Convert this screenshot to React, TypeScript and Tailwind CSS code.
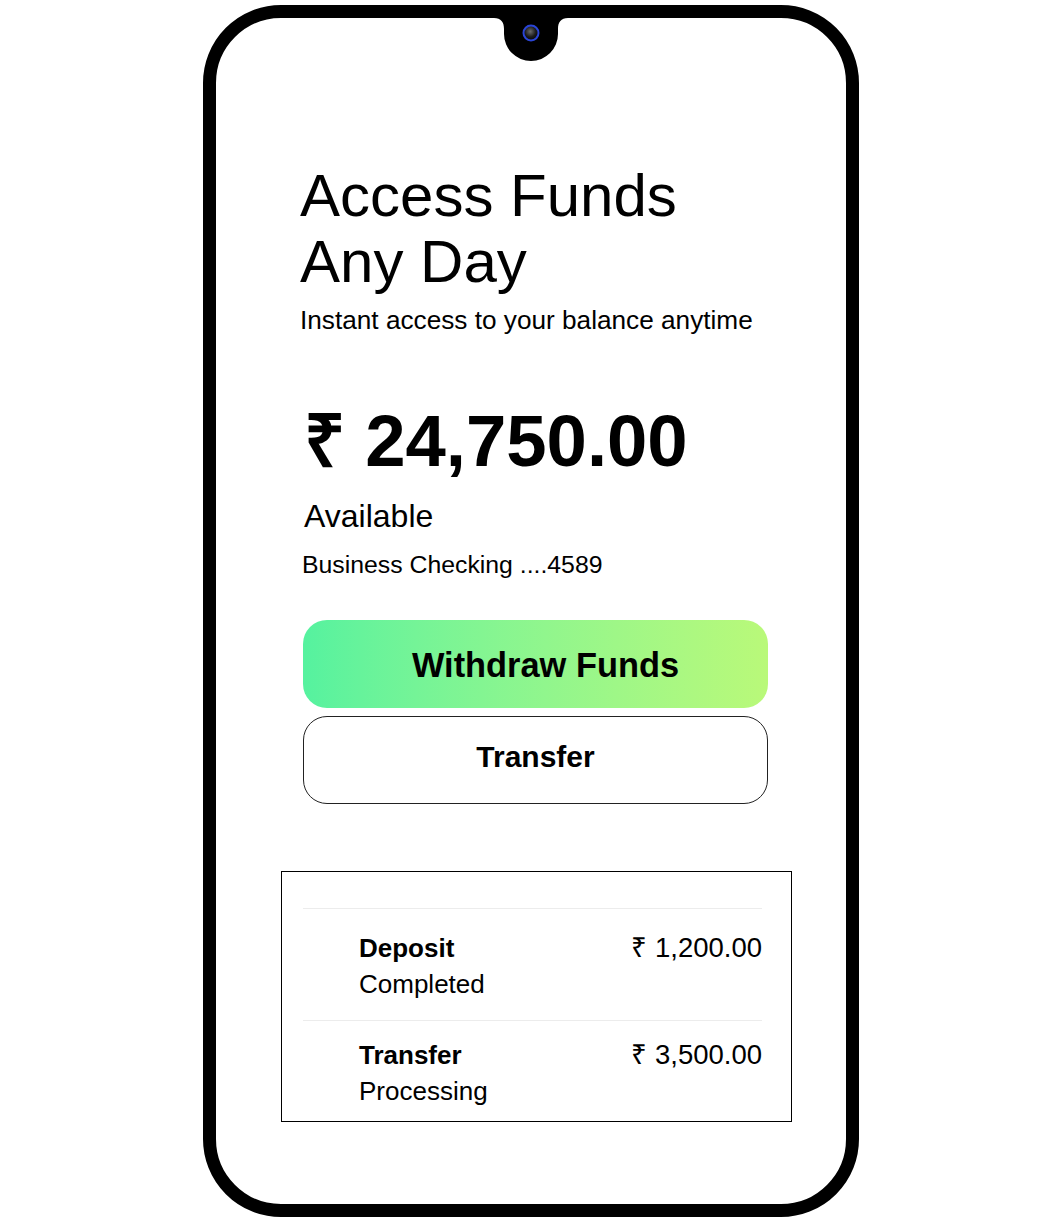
import React from 'react';

const transactions = [
  { name: 'Deposit', status: 'Completed', amount: '₹ 1,200.00', pad: 'pt-[21px] pb-[18px]' },
  { name: 'Transfer', status: 'Processing', amount: '₹ 3,500.00', pad: 'pt-[16px] pb-[18px]' },
];

function Notch() {
  return (
    <svg
      width="74"
      height="43"
      viewBox="0 0 74 43"
      className="absolute left-1/2 top-0 -translate-x-1/2"
    >
      <path d="M0 0 H74 C67 0 64 4 64 11 V16 A27 27 0 0 1 10 16 V11 C10 4 7 0 0 0 Z" fill="#000" />
      <defs>
        <radialGradient id="lens" cx="45%" cy="40%" r="60%">
          <stop offset="0%" stopColor="#6b6b6b" />
          <stop offset="60%" stopColor="#1c1c1c" />
          <stop offset="100%" stopColor="#050505" />
        </radialGradient>
      </defs>
      <circle cx="37" cy="15" r="7.5" fill="url(#lens)" stroke="#2a45d6" strokeWidth="2" />
    </svg>
  );
}

export default function App() {
  return (
    <div className="min-h-screen bg-white pt-[5px] font-['Liberation_Sans',Arial,sans-serif] text-black">
      <div className="relative mx-auto h-[1212px] w-[656px] overflow-hidden rounded-[78px] border-[13px] border-black bg-white">
        <Notch />

        <div className="ml-[84px] w-[468px] pt-[145px]">
          <h1 className="text-[60px] leading-[66px] font-normal">
            Access Funds
            <br />
            Any Day
          </h1>
          <p className="mt-[10px] text-[26.2px] leading-[30px]">Instant access to your balance anytime</p>

          <div className="mt-[66px] pl-[4px] text-[72.5px] leading-[80px] font-bold">₹ 24,750.00</div>
          <div className="mt-[15px] pl-[4px] text-[32px] leading-[40px]">Available</div>
          <div className="mt-[13px] pl-[2px] text-[24.8px] leading-[32px]">Business Checking ....4589</div>

          <div className="mt-[39px] flex flex-col gap-2 pl-[3px]">
            <button className="flex h-[88px] w-[465px] items-center justify-center rounded-[24px] bg-gradient-to-r from-[#55f29f] to-[#b9f979] pt-[3px] pl-[20px] text-[34.4px] font-bold">
              Withdraw Funds
            </button>
            <button className="flex h-[88px] w-[465px] items-center justify-center rounded-[24px] border border-[#222] bg-white pb-[8px] text-[30px] font-bold">
              Transfer
            </button>
          </div>
        </div>

        <div className="mt-[67px] ml-[65px] h-[251px] w-[511px] overflow-hidden border border-black pt-[36px] pr-[29px] pl-[21px]">
          {transactions.map((t) => (
            <div key={t.name} className={`flex justify-between border-t border-[#ececec] ${t.pad}`}>
              <div className="pl-[56px]">
                <div className="text-[26px] leading-[36px] font-bold">{t.name}</div>
                <div className="text-[26px] leading-[36px]">{t.status}</div>
              </div>
              <div className="text-[27.5px] leading-[36px]">{t.amount}</div>
            </div>
          ))}
        </div>
      </div>
    </div>
  );
}
